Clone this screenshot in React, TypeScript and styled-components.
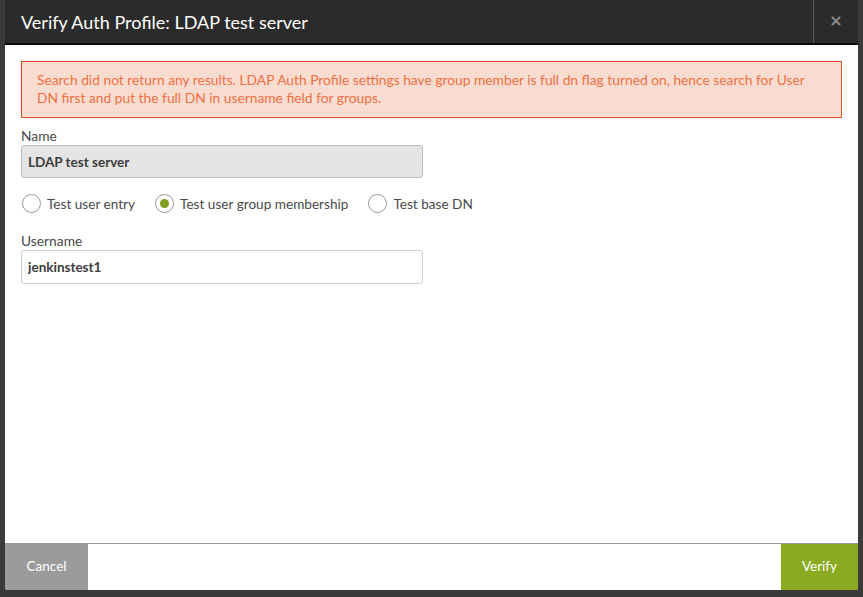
import React, { useState } from 'react';
import styled, { createGlobalStyle } from 'styled-components';

const GlobalStyle = createGlobalStyle`
  html, body {
    margin: 0;
    padding: 0;
    background: #3a3a3a;
    font-family: Lato, "Open Sans", sans-serif;
  }
  * { box-sizing: border-box; }
`;

const Backdrop = styled.div`
  width: 863px;
  height: 597px;
  background: #3a3a3a;
  padding: 0 5px 7px 5px;
  overflow: hidden;
`;

const Modal = styled.div`
  width: 853px;
  height: 590px;
  background: #fff;
  display: flex;
  flex-direction: column;
  border-radius: 0 0 3px 3px;
  overflow: hidden;
`;

const Header = styled.div`
  height: 45px;
  flex: none;
  background: #2b2b2b;
  border-bottom: 2px solid #0a0a0a;
  display: flex;
  align-items: center;
`;

const Title = styled.h1`
  flex: 1;
  margin: 0;
  padding-left: 16px;
  font-size: 18px;
  font-weight: 400;
  color: #fff;
`;

const CloseBtn = styled.button`
  width: 45px;
  height: 100%;
  border: none;
  border-left: 1px solid #5a5a5a;
  background: transparent;
  color: #8c8c8c;
  font-size: 16px;
  font-weight: 900;
  font-family: "DejaVu Sans", sans-serif;
  display: flex;
  align-items: center;
  justify-content: center;
  padding: 0 0 3px 0;
`;

const Body = styled.div`
  flex: 1;
  padding: 16px 16px 0 16px;
`;

const Alert = styled.div`
  background: #f8dcd0;
  border: 1px solid #e0531f;
  color: #ef7045;
  font-size: 13.8px;
  line-height: 18px;
  padding: 9px 15px 10px 15px;
  margin-bottom: 9px;
`;

const Field = styled.div`
  display: flex;
  flex-direction: column;
  width: 402px;
`;

const Label = styled.label`
  font-size: 13.8px;
  color: #4a4a4a;
  line-height: 17px;
  margin-bottom: 1px;
`;

const Input = styled.input<{ $readOnly?: boolean }>`
  height: ${(p) => (p.$readOnly ? '33px' : '34px')};
  border: 1px solid ${(p) => (p.$readOnly ? '#bdbdbd' : '#cfcfcf')};
  border-radius: 3px;
  background: ${(p) => (p.$readOnly ? '#e4e4e4' : '#fff')};
  font-family: Lato, sans-serif;
  font-size: 13.5px;
  font-weight: 700;
  color: #3c3c3c;
  padding: 0 6px;
  outline: none;
`;

const RadioRow = styled.div`
  display: flex;
  align-items: center;
  gap: 20px;
  margin: 16px 0 19px 1px;
`;

const RadioOption = styled.label`
  display: flex;
  align-items: center;
  gap: 6px;
  font-size: 13.6px;
  color: #4a4a4a;
  cursor: pointer;
`;

const Circle = styled.span<{ $checked: boolean }>`
  width: 19px;
  height: 19px;
  border-radius: 50%;
  border: 1px solid #9a9a9a;
  background: #fff;
  display: flex;
  align-items: center;
  justify-content: center;
  &::after {
    content: '';
    width: 9px;
    height: 9px;
    border-radius: 50%;
    background: ${(p) => (p.$checked ? '#7fa020' : 'transparent')};
  }
`;

const Footer = styled.div`
  height: 47px;
  flex: none;
  border-top: 1px solid #9a9a9a;
  display: flex;
  justify-content: space-between;
`;

const FooterBtn = styled.button<{ $primary?: boolean }>`
  width: ${(p) => (p.$primary ? '77px' : '83px')};
  border: none;
  background: ${(p) => (p.$primary ? '#8aab1f' : '#9b9b9b')};
  color: #fff;
  font-family: Lato, sans-serif;
  font-size: 13.5px;
  font-weight: 400;
  padding: 0 0 2px 0;
  cursor: pointer;
`;

const options = ['Test user entry', 'Test user group membership', 'Test base DN'];

const App = () => {
  const [selected, setSelected] = useState(1);

  return (
    <>
      <GlobalStyle />
      <Backdrop>
        <Modal>
          <Header>
            <Title>Verify Auth Profile: LDAP test server</Title>
            <CloseBtn>×</CloseBtn>
          </Header>
          <Body>
            <Alert>
              Search did not return any results. LDAP Auth Profile settings have group member is full dn flag turned on, hence search for User DN first and put the full DN in username field for groups.
            </Alert>
            <Field>
              <Label>Name</Label>
              <Input $readOnly readOnly value="LDAP test server" />
            </Field>
            <RadioRow>
              {options.map((opt, i) => (
                <RadioOption key={opt} onClick={() => setSelected(i)}>
                  <Circle $checked={selected === i} />
                  {opt}
                </RadioOption>
              ))}
            </RadioRow>
            <Field>
              <Label>Username</Label>
              <Input defaultValue="jenkinstest1" />
            </Field>
          </Body>
          <Footer>
            <FooterBtn>Cancel</FooterBtn>
            <FooterBtn $primary>Verify</FooterBtn>
          </Footer>
        </Modal>
      </Backdrop>
    </>
  );
};

export default App;
